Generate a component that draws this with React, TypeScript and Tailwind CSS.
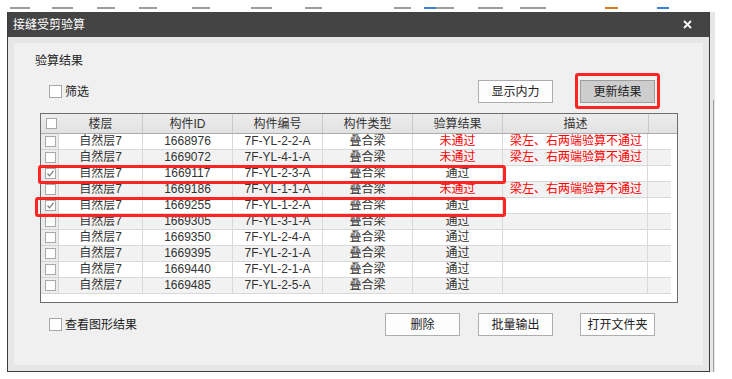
import React from 'react';

type Row = {
  floor: string;
  id: string;
  code: string;
  type: string;
  pass: boolean;
  checked: boolean;
};

const rows: Row[] = [
  { floor: '自然层7', id: '1668976', code: '7F-YL-2-2-A', type: '叠合梁', pass: false, checked: false },
  { floor: '自然层7', id: '1669072', code: '7F-YL-4-1-A', type: '叠合梁', pass: false, checked: false },
  { floor: '自然层7', id: '1669117', code: '7F-YL-2-3-A', type: '叠合梁', pass: true, checked: true },
  { floor: '自然层7', id: '1669186', code: '7F-YL-1-1-A', type: '叠合梁', pass: false, checked: false },
  { floor: '自然层7', id: '1669255', code: '7F-YL-1-2-A', type: '叠合梁', pass: true, checked: true },
  { floor: '自然层7', id: '1669305', code: '7F-YL-3-1-A', type: '叠合梁', pass: true, checked: false },
  { floor: '自然层7', id: '1669350', code: '7F-YL-2-4-A', type: '叠合梁', pass: true, checked: false },
  { floor: '自然层7', id: '1669395', code: '7F-YL-2-1-A', type: '叠合梁', pass: true, checked: false },
  { floor: '自然层7', id: '1669440', code: '7F-YL-2-1-A', type: '叠合梁', pass: true, checked: false },
  { floor: '自然层7', id: '1669485', code: '7F-YL-2-5-A', type: '叠合梁', pass: true, checked: false },
];

// toolbar remnants of the window behind the dialog
const marks = [
  { x: 10, w: 20, c: '#9c9c9c' },
  { x: 52, w: 21, c: '#9c9c9c' },
  { x: 97, w: 18, c: '#9c9c9c' },
  { x: 139, w: 18, c: '#9c9c9c' },
  { x: 192, w: 18, c: '#9c9c9c' },
  { x: 251, w: 21, c: '#9c9c9c' },
  { x: 305, w: 17, c: '#9c9c9c' },
  { x: 394, w: 17, c: '#9c9c9c' },
  { x: 424, w: 12, c: '#3b82d6' },
  { x: 436, w: 18, c: '#9c9c9c' },
  { x: 478, w: 25, c: '#9c9c9c' },
  { x: 520, w: 26, c: '#9c9c9c' },
  { x: 605, w: 13, c: '#d97a1a' },
  { x: 657, w: 12, c: '#3b82d6' },
];

const CheckBox: React.FC<{ checked?: boolean; size?: string }> = ({ checked, size = 'w-[11px] h-[11px]' }) => (
  <div className={`${size} border border-[#a8a8a8] bg-white flex items-center justify-center shrink-0`}>
    {checked && (
      <svg width="9" height="9" viewBox="0 0 9 9">
        <polyline points="1.5,4.5 3.5,6.8 7.5,2" fill="none" stroke="#7a7a7a" strokeWidth="1.2" />
      </svg>
    )}
  </div>
);

const Btn: React.FC<{ children: React.ReactNode; active?: boolean }> = ({ children, active }) => (
  <div
    className={`w-[75px] h-[23px] flex items-center justify-center border text-[12px] text-[#222] ${
      active ? 'bg-[#cdcdcd] border-[#9e9e9e]' : 'bg-[#fdfdfd] border-[#adadad]'
    }`}
  >
    {children}
  </div>
);

const App: React.FC = () => {
  return (
    <div className="w-[732px] h-[379px] bg-white overflow-hidden flex flex-col font-['Liberation_Sans','Noto_Sans_CJK_SC',sans-serif]">
      {/* background strip */}
      <div className="h-[12px] flex items-start pt-[7px]">
        {marks.map((m, i) => (
          <div
            key={i}
            className="h-[2px] shrink-0"
            style={{ marginLeft: i === 0 ? m.x : m.x - marks[i - 1].x - marks[i - 1].w, width: m.w, background: m.c }}
          />
        ))}
      </div>

      <div className="flex">
        <div className="w-[7px]" />

        {/* dialog */}
        <div className="w-[703px] h-[360px] flex flex-col border-x border-b border-[#3c3c3c] bg-[#e6e6e6]">
          <div className="h-[25px] bg-[#444444] flex items-center justify-between pl-[5px] pr-[17px] text-white text-[12px]">
            <span>接缝受剪验算</span>
            <svg width="9" height="9" viewBox="0 0 9 9">
              <path d="M1 1 L8 8 M8 1 L1 8" stroke="white" strokeWidth="1.8" />
            </svg>
          </div>

          <div className="flex-1 p-[6px] pb-[6px]">
            <div className="h-full bg-[#f0f0f0] flex flex-col text-[12px] text-[#222]">
              <div className="pt-[11px] pl-[21px] h-[25px] leading-[14px]">验算结果</div>

              {/* filter row */}
              <div className="mt-[12px] h-[23px] flex items-center justify-between pl-[35px] pr-[48px]">
                <div className="flex items-center gap-[3px]">
                  <CheckBox size="w-[13px] h-[13px]" />
                  <span>筛选</span>
                </div>
                <div className="flex gap-[27px]">
                  <Btn>显示内力</Btn>
                  <div className="relative">
                    <Btn active>更新结果</Btn>
                    <div className="absolute left-[-5px] top-[-7px] w-[85px] h-[36px] border-[3px] border-[#ff2323] rounded-[3px]" />
                  </div>
                </div>
              </div>

              {/* table */}
              <div className="mt-[10px] ml-[26px] w-[638px] h-[190px] border border-[#6d6d6d] bg-white relative">
                <div className="h-[20px] flex bg-gradient-to-b from-[#ededed] to-[#e2e2e2] border-b border-[#ababab] text-[#333]">
                  <div className="w-[102px] flex items-center border-r border-[#cacaca] pl-[5px]">
                    <CheckBox />
                    <span className="flex-1 text-center pl-[2px]">楼层</span>
                  </div>
                  <div className="w-[90px] flex items-center justify-center border-r border-[#cacaca]">构件ID</div>
                  <div className="w-[90px] flex items-center justify-center border-r border-[#cacaca]">构件编号</div>
                  <div className="w-[90px] flex items-center justify-center border-r border-[#cacaca]">构件类型</div>
                  <div className="w-[90px] flex items-center justify-center border-r border-[#cacaca]">验算结果</div>
                  <div className="w-[146px] flex items-center justify-center border-r border-[#cacaca]">描述</div>
                  <div className="flex-1" />
                </div>

                {rows.map((r, i) => (
                  <div key={r.id} className="h-[16px] flex text-[#333] leading-[15px]">
                    <div className="w-[18px] bg-[#ececec] border-r border-b border-[#d4d4d4] flex items-center pl-[4px]">
                      <CheckBox checked={r.checked} />
                    </div>
                    <div
                      className={`w-[612px] flex border-b border-[#d9d9d9] ${i % 2 === 1 ? 'bg-[#f2f2f2]' : 'bg-white'}`}
                    >
                      <div className="w-[84px] text-center border-r border-[#d9d9d9]">{r.floor}</div>
                      <div className="w-[90px] text-center border-r border-[#d9d9d9]">{r.id}</div>
                      <div className="w-[90px] text-center border-r border-[#d9d9d9]">{r.code}</div>
                      <div className="w-[90px] text-center border-r border-[#d9d9d9]">{r.type}</div>
                      <div className={`w-[90px] text-center border-r border-[#d9d9d9] ${r.pass ? '' : 'text-[#ff0000]'}`}>
                        {r.pass ? '通过' : '未通过'}
                      </div>
                      <div className="w-[145px] pl-[7px] border-r border-[#d9d9d9] text-[#ff0000]">
                        {r.pass ? '' : '梁左、右两端验算不通过'}
                      </div>
                    </div>
                  </div>
                ))}

                <div className="absolute left-[-3px] top-[51px] w-[468px] h-[19px] border-[3px] border-[#ff2323] rounded-[3px]" />
                <div className="absolute left-[-6px] top-[83px] w-[471px] h-[20px] border-[3px] border-[#ff2323] rounded-[3px]" />
              </div>

              {/* bottom row */}
              <div className="mt-[10px] h-[23px] flex items-center pl-[35px]">
                <div className="flex items-center gap-[3px] w-[336px]">
                  <CheckBox size="w-[13px] h-[13px]" />
                  <span>查看图形结果</span>
                </div>
                <div className="flex">
                  <Btn>删除</Btn>
                  <div className="w-[18px]" />
                  <Btn>批量输出</Btn>
                  <div className="w-[27px]" />
                  <Btn>打开文件夹</Btn>
                </div>
              </div>
            </div>
          </div>
        </div>

        <div className="w-[5px] h-[360px] bg-[#e6e6e6] flex justify-end pr-[1px] pt-[88px]">
          <div className="w-[1px] h-full bg-[#a0a0a0]" />
        </div>
      </div>
    </div>
  );
};

export default App;
